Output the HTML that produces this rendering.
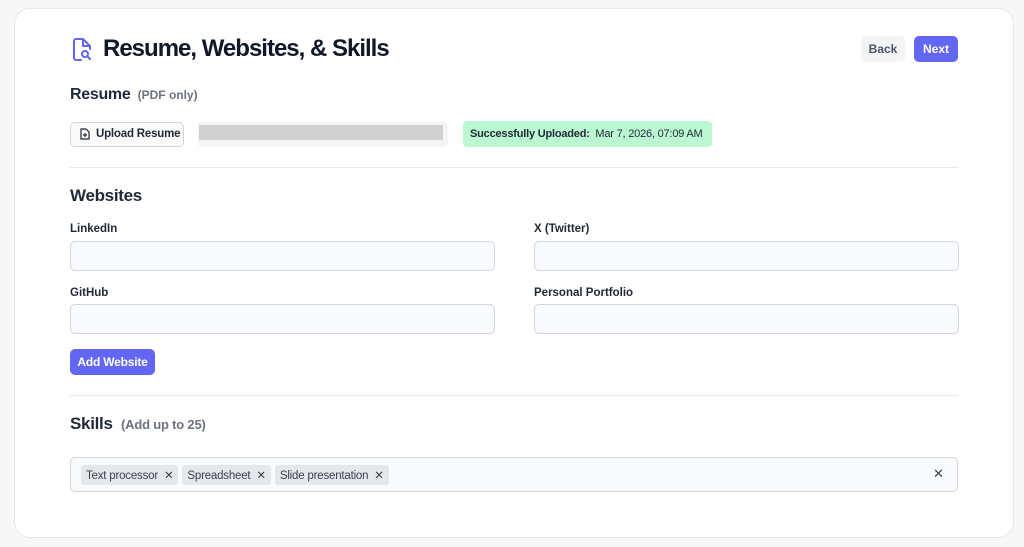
<!DOCTYPE html>
<html><head><style>
*{box-sizing:border-box;margin:0;padding:0}
body{width:1024px;height:547px;background:#f7f7f8;font-family:"Liberation Sans",sans-serif;color:#111827;position:relative;overflow:hidden}
.card{position:absolute;left:14px;top:8px;width:1000px;height:530px;background:#fff;border:1px solid #e5e7eb;border-radius:16px}
.a{position:absolute;white-space:nowrap}
.lbl{font-size:11.5px;font-weight:bold;color:#1f2937}
.inp{position:absolute;height:30px;background:#f9fafb;border:1px solid #d1d5db;border-radius:5px}
.hr{position:absolute;left:70px;width:888px;height:1px;background:#e5e7eb}
.h{font-size:16px;font-weight:bold;letter-spacing:-0.3px;color:#1f2937}
.tag{display:inline-block;background:#e5e7eb;border-radius:3px;font-size:11.5px;color:#374151;padding:3px 5px;margin-right:4px;height:20px;letter-spacing:-0.2px}
</style></head><body>
<div class="card"></div>
<svg class="a" style="left:72px;top:37px" width="22" height="25" viewBox="0 0 22 25" fill="none" stroke="#6366f1" stroke-width="2" stroke-linecap="round" stroke-linejoin="round"><path d="M9 23H4a2 2 0 0 1-2-2V4a2 2 0 0 1 2-2h7l7 7v3"/><path d="M11 2v7h7"/><circle cx="13" cy="17" r="3"/><path d="M15.5 19.5L18 22"/></svg>
<div class="a" style="left:103px;top:35px;font-size:24px;font-weight:bold;letter-spacing:-1px;color:#111827">Resume, Websites, &amp; Skills</div>
<div class="a" style="left:861px;top:36px;width:44px;height:26px;background:#f3f4f6;border-radius:5px;font-size:12px;font-weight:bold;color:#4b5563;text-align:center;line-height:26px">Back</div>
<div class="a" style="left:914px;top:36px;width:44px;height:26px;background:#6366f1;border-radius:5px;font-size:12px;font-weight:bold;color:#fff;text-align:center;line-height:26px">Next</div>
<div class="a h" style="left:70px;top:86px">Resume <span style="font-size:12px;color:#6b7280;font-weight:bold;margin-left:3px;letter-spacing:0">(PDF only)</span></div>
<div class="a" style="left:70px;top:122px;width:114px;height:25px;border:1px solid #d1d5db;border-radius:5px;background:#fafafa;font-size:11.5px;font-weight:bold;line-height:23px;padding-left:25px;color:#1f2937;letter-spacing:-0.2px">Upload Resume</div>
<svg class="a" style="left:80px;top:128px" width="10" height="12" viewBox="0 0 10 12" fill="none" stroke="#1f2937" stroke-width="1.2"><path d="M1 1h5l3 3v7H1z"/><path d="M5 5v4M3 7h4"/></svg>
<div class="a" style="left:198px;top:122px;width:250px;height:25px;background:#f3f4f6;border-radius:4px"></div>
<div class="a" style="left:199px;top:125px;width:244px;height:15px;background:#d1d1d1"></div>
<div class="a" style="left:463px;top:121px;width:249px;height:26px;background:#bbf7d0;border-radius:4px;font-size:11px;line-height:26px;padding-left:7px;color:#1f2937;letter-spacing:-0.2px"><b>Successfully Uploaded:</b>&nbsp; Mar 7, 2026, 07:09 AM</div>
<div class="hr" style="top:167px"></div>
<div class="a h" style="left:70px;top:186px;font-size:17px">Websites</div>
<div class="a lbl" style="left:70px;top:223px">LinkedIn</div>
<div class="a lbl" style="left:534px;top:223px">X (Twitter)</div>
<div class="inp" style="left:70px;top:241px;width:425px"></div>
<div class="inp" style="left:534px;top:241px;width:425px"></div>
<div class="a lbl" style="left:70px;top:287px">GitHub</div>
<div class="a lbl" style="left:534px;top:287px">Personal Portfolio</div>
<div class="inp" style="left:70px;top:304px;width:425px"></div>
<div class="inp" style="left:534px;top:304px;width:425px"></div>
<div class="a" style="left:70px;top:349px;width:85px;height:26px;background:#6366f1;border-radius:5px;color:#fff;font-size:12px;font-weight:bold;text-align:center;line-height:26px;letter-spacing:-0.2px">Add Website</div>
<div class="hr" style="top:395px"></div>
<div class="a h" style="left:70px;top:414px;font-size:17px">Skills <span style="font-size:13px;color:#6b7280;font-weight:bold;margin-left:4px;letter-spacing:-0.2px">(Add up to 25)</span></div>
<div class="a" style="left:70px;top:457px;width:888px;height:35px;background:#f9fafb;border:1px solid #d1d5db;border-radius:5px;padding:7px 0 0 10px">
<span class="tag">Text processor &nbsp;✕</span><span class="tag">Spreadsheet &nbsp;✕</span><span class="tag">Slide presentation &nbsp;✕</span>
</div>
<div class="a" style="left:933px;top:466px;font-size:13px;color:#374151">✕</div>
</body></html>
